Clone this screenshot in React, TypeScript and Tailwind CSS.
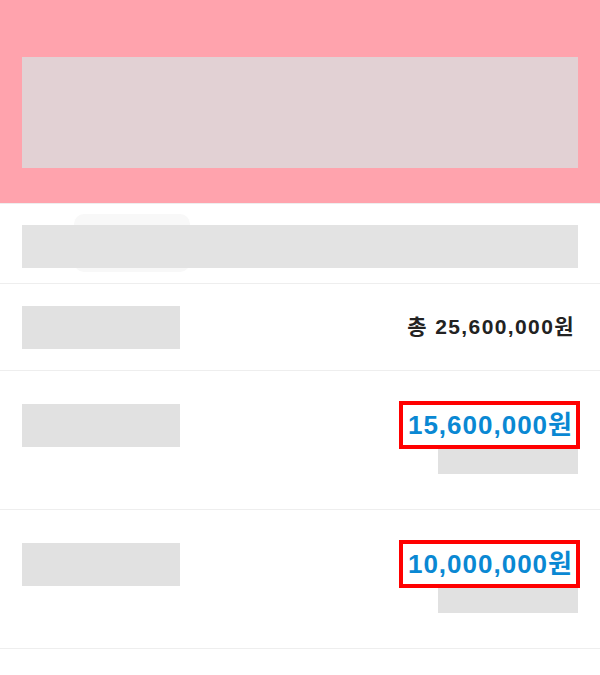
import React from "react";

const font = { fontFamily: '"Liberation Sans", "Noto Sans CJK KR", Arial, sans-serif' };

function AmountRow({ amount }: { amount: string }) {
  return (
    <div className="flex h-[139px] items-start justify-between border-b border-[#eeeeee] pl-[22px] pr-[20px] pt-[30px]">
      <div className="mt-[3px] h-[43px] w-[158px] bg-[#e1e1e1]" />
      <div className="flex flex-col items-end">
        <div className="flex h-[48px] items-center border-4 border-[#ff0000] pl-[5px] pr-[3px]">
          <span className="text-[26px] font-bold leading-none tracking-[1px] text-[#0a88d3]" style={font}>
            {amount}
          </span>
        </div>
        <div className="mr-[2px] h-[25px] w-[140px] bg-[#e1e1e1]" />
      </div>
    </div>
  );
}

export default function App() {
  return (
    <div className="h-[675px] w-[600px] overflow-hidden bg-white" style={font}>
      <div className="h-[204px] border-b border-[#eeeeee] bg-[#ffa3ad] px-[22px] pt-[57px]">
        <div className="h-[111px] bg-[#e2d1d4]" />
      </div>
      <div className="relative h-[80px] border-b border-[#eeeeee] px-[22px] pt-[21px]">
        <div className="absolute left-[74px] top-[10px] h-[58px] w-[116px] rounded-[10px] bg-[#f8f8f8]" />
        <div className="relative h-[43px] bg-[#e1e1e1]/95" />
      </div>
      <div className="flex h-[87px] items-center justify-between border-b border-[#eeeeee] pl-[22px] pr-[25px]">
        <div className="h-[43px] w-[158px] bg-[#e1e1e1]" />
        <span className="text-[21px] font-bold tracking-[1.4px] text-[#222222]">총 25,600,000원</span>
      </div>
      <AmountRow amount="15,600,000원" />
      <AmountRow amount="10,000,000원" />
    </div>
  );
}
